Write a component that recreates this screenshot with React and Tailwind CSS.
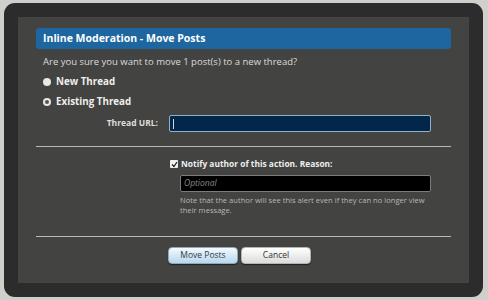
export default function App() {
  return (
    <div
      className="w-[488px] h-[300px] overflow-hidden bg-[#cfd0cb] pt-[3px] pl-[4px]"
      style={{ fontFamily: "'Open Sans', 'Liberation Sans', sans-serif" }}
    >
      <div className="w-[479px] h-[294px] rounded-[11px] bg-[#2b2c2b] p-[14px]">
        <div className="h-[266px] bg-[#434341] px-[18px] pt-[11px]">
          <div className="h-[21px] rounded-[3px] bg-[#1d66a0] pl-[7px] flex items-center text-[10.5px] font-bold text-white">
            Inline Moderation - Move Posts
          </div>

          <p className="mt-[6px] pl-[7px] text-[9.5px] text-[#dcdcdc] leading-[14px]">
            Are you sure you want to move 1 post(s) to a new thread?
          </p>

          <div className="mt-[5px] pl-[7px] flex items-center gap-[5px] h-[16px]">
            <span className="w-[8px] h-[8px] rounded-full bg-[#e8e8e8]" />
            <span className="text-[9.8px] font-bold text-[#eeeeee]">New Thread</span>
          </div>
          <div className="mt-[4px] pl-[7px] flex items-center gap-[5px] h-[16px]">
            <span className="w-[8px] h-[8px] rounded-full bg-[#e8e8e8] flex items-center justify-center">
              <span className="w-[4px] h-[4px] rounded-full bg-[#555]" />
            </span>
            <span className="text-[9.8px] font-bold text-[#eeeeee]">Existing Thread</span>
          </div>

          <div className="mt-[5px] flex items-center h-[17px]">
            <span className="w-[122px] text-right text-[8.5px] font-bold text-[#dddddd]">Thread URL:</span>
            <div className="ml-[11px] w-[262px] h-[17px] rounded-[2px] border border-[#8fb0c9] bg-[#02274a] flex items-center pl-[3px]">
              <span className="w-px h-[10px] bg-[#cfd8e0]" />
            </div>
          </div>

          <div className="mt-[14px] h-px bg-[#b9bab6]" />

          <div className="mt-[11px] pl-[134px]">
            <div className="flex items-center gap-[3px] h-[12px]">
              <span className="w-[8px] h-[8px] bg-[#f0f0f0] rounded-[1px] flex items-center justify-center">
                <svg width="7" height="7" viewBox="0 0 7 7">
                  <path d="M1 3.5 L3 5.5 L6 1" stroke="#222" strokeWidth="1.3" fill="none" />
                </svg>
              </span>
              <span className="text-[8.4px] font-bold text-[#eeeeee]">Notify author of this action. Reason:</span>
            </div>
            <div className="mt-[5px] ml-[10px] w-[251px] h-[17px] rounded-[2px] border border-[#7c7c7c] bg-black flex items-center pl-[3px]">
              <span className="text-[8.5px] italic text-[#8a8a8a]">Optional</span>
            </div>
            <p className="mt-[3px] ml-[10px] w-[245px] text-[7.6px] leading-[10px] text-[#b8b8b4]">
              Note that the author will see this alert even if they can no longer view their message.
            </p>
          </div>

          <div className="mt-[21px] h-px bg-[#b9bab6]" />

          <div className="mt-[10px] flex justify-center gap-[3px] pr-[8px]">
            <button className="w-[70px] h-[17px] rounded-[4px] border border-[#8fa9bd] bg-gradient-to-b from-[#f4f9fd] to-[#b8d7ee] text-[8.5px] text-[#2d3b48] shadow-[0_1px_1px_rgba(0,0,0,0.5)]">
              Move Posts
            </button>
            <button className="w-[70px] h-[17px] rounded-[4px] border border-[#b5b5b5] bg-gradient-to-b from-[#ffffff] to-[#dcdcdc] text-[8.5px] text-[#333] shadow-[0_1px_1px_rgba(0,0,0,0.5)]">
              Cancel
            </button>
          </div>
        </div>
      </div>
    </div>
  );
}
